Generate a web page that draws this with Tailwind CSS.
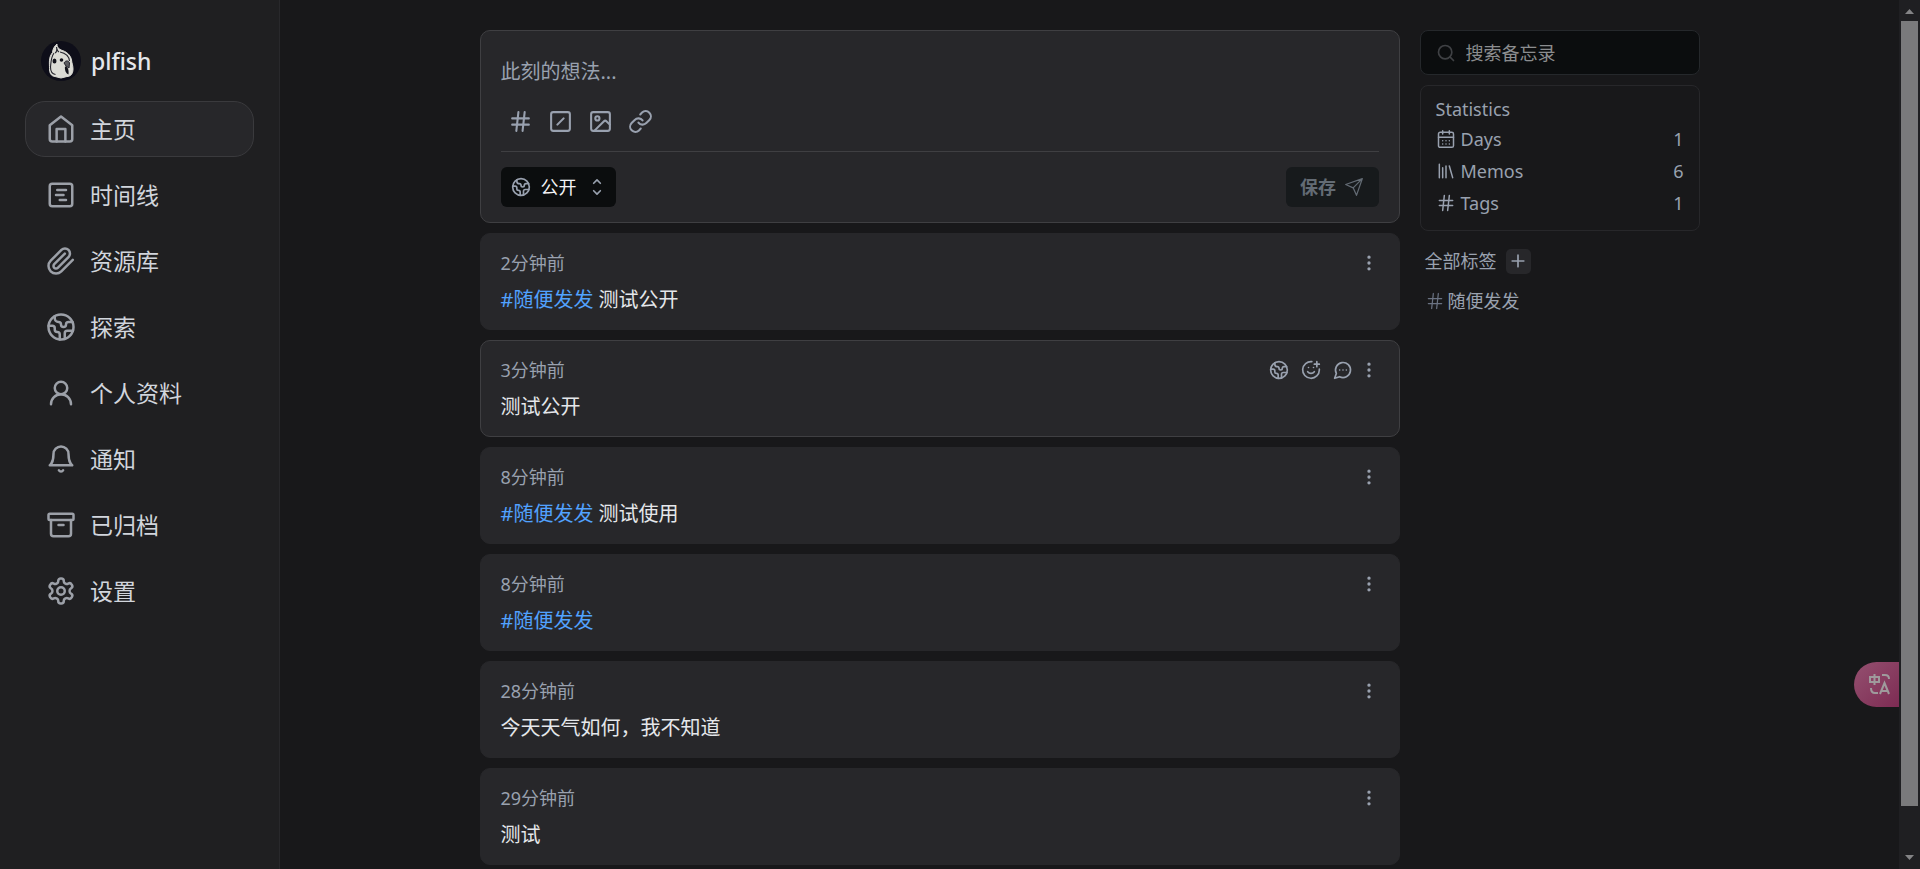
<!DOCTYPE html>
<html lang="zh-CN" class="h-full">
<head>
<meta charset="utf-8">
<title>Memos</title>
<script src="https://cdn.jsdelivr.net/npm/@tailwindcss/browser@4"></script>
</head>
<body class="h-screen overflow-hidden bg-[#18181a] font-['Noto_Sans','Noto_Sans_CJK_SC',sans-serif] text-gray-400 flex">

<svg class="hidden" aria-hidden="true">
  <defs>
    <symbol id="home" viewBox="0 0 24 24"><path d="m3 9 9-7 9 7v11a2 2 0 0 1-2 2H5a2 2 0 0 1-2-2z"/><path d="M8.500 22V12h7v10"/></symbol>
    <symbol id="timeline" viewBox="0 0 24 24"><rect x="3" y="3" width="18" height="18" rx="2"/><path d="M9 8h7M8 12h6M11 16h5"/></symbol>
    <symbol id="clip" viewBox="0 0 24 24"><path d="m21.44 11.05-9.19 9.19a6 6 0 0 1-8.49-8.49l8.57-8.57A4 4 0 1 1 18 8.84l-8.59 8.57a2 2 0 0 1-2.83-2.83l8.49-8.48"/></symbol>
    <symbol id="globe" viewBox="0 0 24 24"><path d="M21.54 15H17a2 2 0 0 0-2 2v4.54"/><path d="M7 3.34V5a3 3 0 0 0 3 3a2 2 0 0 1 2 2c0 1.1.9 2 2 2a2 2 0 0 0 2-2c0-1.1.9-2 2-2h3.17"/><path d="M11 21.95V18a2 2 0 0 0-2-2a2 2 0 0 1-2-2v-1a2 2 0 0 0-2-2H2.05"/><circle cx="12" cy="12" r="10"/></symbol>
    <symbol id="user" viewBox="0 0 24 24"><circle cx="12" cy="8" r="5"/><path d="M20 21a8 8 0 0 0-16 0"/></symbol>
    <symbol id="bell" viewBox="0 0 24 24"><path d="M6 8a6 6 0 0 1 12 0c0 7 3 9 3 9H3s3-2 3-9"/><path d="M10.3 21a1.94 1.94 0 0 0 3.4 0"/></symbol>
    <symbol id="archive" viewBox="0 0 24 24"><rect x="2" y="3" width="20" height="5" rx="1"/><path d="M4 8v11a2 2 0 0 0 2 2h12a2 2 0 0 0 2-2V8"/><path d="M10 12h4"/></symbol>
    <symbol id="gear" viewBox="0 0 24 24"><path d="M12.22 2h-.44a2 2 0 0 0-2 2v.18a2 2 0 0 1-1 1.73l-.43.25a2 2 0 0 1-2 0l-.15-.08a2 2 0 0 0-2.73.73l-.22.38a2 2 0 0 0 .73 2.73l.15.1a2 2 0 0 1 1 1.72v.51a2 2 0 0 1-1 1.74l-.15.09a2 2 0 0 0-.73 2.73l.22.38a2 2 0 0 0 2.73.73l.15-.08a2 2 0 0 1 2 0l.43.25a2 2 0 0 1 1 1.73V20a2 2 0 0 0 2 2h.44a2 2 0 0 0 2-2v-.18a2 2 0 0 1 1-1.73l.43-.25a2 2 0 0 1 2 0l.15.08a2 2 0 0 0 2.73-.73l.22-.39a2 2 0 0 0-.73-2.73l-.15-.08a2 2 0 0 1-1-1.74v-.5a2 2 0 0 1 1-1.74l.15-.09a2 2 0 0 0 .73-2.73l-.22-.38a2 2 0 0 0-2.73-.73l-.15.08a2 2 0 0 1-2 0l-.43-.25a2 2 0 0 1-1-1.73V4a2 2 0 0 0-2-2z"/><circle cx="12" cy="12" r="3"/></symbol>
    <symbol id="hash" viewBox="0 0 24 24"><path d="M4 9h16M4 15h16M10 3 8 21M16 3l-2 18"/></symbol>
    <symbol id="slash" viewBox="0 0 24 24"><rect x="3" y="3" width="18" height="18" rx="2"/><path d="m9 15 6-6"/></symbol>
    <symbol id="image" viewBox="0 0 24 24"><rect x="3" y="3" width="18" height="18" rx="2"/><circle cx="9" cy="9" r="2"/><path d="m21 15-3.086-3.086a2 2 0 0 0-2.828 0L6 21"/></symbol>
    <symbol id="link" viewBox="0 0 24 24"><path d="M10 13a5 5 0 0 0 7.54.54l3-3a5 5 0 0 0-7.07-7.07l-1.72 1.71"/><path d="M14 11a5 5 0 0 0-7.54-.54l-3 3a5 5 0 0 0 7.07 7.07l1.71-1.71"/></symbol>
    <symbol id="updown" viewBox="0 0 24 24"><path d="m8 16.500 4 4 4-4M8 7.500l4-4 4 4"/></symbol>
    <symbol id="send" viewBox="0 0 24 24"><path d="m22 2-7 20-4-9-9-4ZM22 2 11 13"/></symbol>
    <symbol id="dots" viewBox="0 0 24 24"><circle cx="12" cy="12" r="1"/><circle cx="12" cy="5" r="1"/><circle cx="12" cy="19" r="1"/></symbol>
    <symbol id="smile" viewBox="0 0 24 24"><path d="M22 11v1a10 10 0 1 1-9-10"/><path d="M8 14s1.500 2 4 2 4-2 4-2M9 9h.01M15 9h.01M16 5h6M19 2v6"/></symbol>
    <symbol id="chat" viewBox="0 0 24 24"><path d="M7.900 20A9 9 0 1 0 4 16.100L2 22Z"/><path d="M8 12h.01M12 12h.01M16 12h.01"/></symbol>
    <symbol id="search" viewBox="0 0 24 24"><circle cx="11" cy="11" r="8"/><path d="m21 21-4.300-4.300"/></symbol>
    <symbol id="calendar" viewBox="0 0 24 24"><rect x="3" y="4" width="18" height="18" rx="2"/><path d="M16 2v4M8 2v4M3 10h18M8 14h.01M12 14h.01M16 14h.01M8 18h.01M12 18h.01M16 18h.01"/></symbol>
    <symbol id="library" viewBox="0 0 24 24"><path d="m16 6 4 14M12 6v14M8 8v12M4 4v16"/></symbol>
    <symbol id="plus" viewBox="0 0 24 24"><path d="M5 12h14M12 5v14"/></symbol>
  </defs>
</svg>

<aside class="w-[280px] shrink-0 h-full bg-[#1f1f21] border-r border-[#28282b] px-[25px] pt-[31px]">
  <a href="#" class="flex items-center gap-[10px] px-4 h-[60px] text-[23px] leading-8 font-medium text-gray-200">
    <svg class="size-10" viewBox="0 0 40 40" aria-hidden="true">
      <circle cx="20" cy="20" r="20" fill="#0e0e19"/>
      <path d="M16 3c-.5 3 1.500 4.500 4 6 5 1.500 9.500 4.500 10.500 10 .2 3 1.500 5 1.500 9 0 5-2.500 7.500-6 7.500l-6 1.500-6-1.500c-4.500-.5-5.500-4-5.500-8 0-6-1-11 3-16 .3-3.500 2-6.500 4.500-8.500Z" fill="#dcdcd6" stroke="#dcdcd6" stroke-width="1"/>
      <path d="M14 12c2-1 2-3.500 1.500-6M18 11c-1.500-1-2-2-2-3.500M13 12c-3 4-3 9-3.500 14 0 4 1 7 5 7.500M19 11c5 1 9 4 9.500 9" fill="none" stroke="#26262e" stroke-width="1.100"/>
      <ellipse cx="13.500" cy="20" rx="2" ry="2.600" fill="#14141c"/><circle cx="20.500" cy="19" r="1.800" fill="#14141c"/>
      <path d="M23 22c1.500-3 5-2.500 5.500 0l-.5 5-3-2Z" fill="#5c5c60" stroke="#26262e"/><path d="M24 25.500c2.500 0 4 2.500 3.500 8-2.500-1-4-4-3.500-8Z" fill="#14141c"/>
    </svg>
    <span>plfish</span>
  </a>
  <nav class="mt-[10px] flex flex-col gap-[10px] text-[23px] text-gray-300 [&_a]:flex [&_a]:items-center [&_a]:gap-[14px] [&_a]:h-14 [&_a]:px-5 [&_a]:rounded-[20px] [&_a]:border [&_a]:border-transparent [&_svg]:size-[30px] [&_svg]:fill-none [&_svg]:stroke-[#9ca0a8] [&_svg]:stroke-2 [&_svg]:[stroke-linecap:round] [&_svg]:[stroke-linejoin:round]">
    <a href="#" aria-current="page" class="bg-[#27272a] !border-[#3a3a3d]"><svg><use href="#home"/></svg>主页</a>
    <a href="#"><svg><use href="#timeline"/></svg>时间线</a>
    <a href="#"><svg><use href="#clip"/></svg>资源库</a>
    <a href="#"><svg><use href="#globe"/></svg>探索</a>
    <a href="#"><svg><use href="#user"/></svg>个人资料</a>
    <a href="#"><svg><use href="#bell"/></svg>通知</a>
    <a href="#"><svg><use href="#archive"/></svg>已归档</a>
    <a href="#"><svg><use href="#gear"/></svg>设置</a>
  </nav>
</aside>

<div class="flex-1 min-w-0 h-full overflow-hidden flex justify-center gap-5 px-5 pt-[30px] [&_svg]:fill-none [&_svg]:stroke-current [&_svg]:stroke-2 [&_svg]:[stroke-linecap:round] [&_svg]:[stroke-linejoin:round] [&_svg]:shrink-0">
  <main class="w-full max-w-[920px] flex flex-col gap-[10px] text-xl">
    <form class="shrink-0 rounded-[10px] border border-[#3f3f42] bg-[#27272a] px-5 pt-[25px] pb-[15px]">
      <textarea aria-label="此刻的想法" rows="1" placeholder="此刻的想法..." class="block w-full h-8 leading-8 resize-none bg-transparent outline-none placeholder:text-gray-400"></textarea>
      <div class="flex mt-[13px] pb-[10px] border-b border-[#3f3f42] [&_button]:size-10 [&_button]:grid [&_button]:place-items-center [&_svg]:size-[25px]">
        <button type="button" aria-label="标签"><svg><use href="#hash"/></svg></button>
        <button type="button" aria-label="命令"><svg><use href="#slash"/></svg></button>
        <button type="button" aria-label="图片"><svg><use href="#image"/></svg></button>
        <button type="button" aria-label="链接"><svg><use href="#link"/></svg></button>
      </div>
      <div class="mt-[15px] flex justify-between items-center">
        <div class="relative flex items-center h-10 w-[115px] rounded-md bg-[#0b0d0e] text-gray-400">
          <svg class="absolute left-[10px] size-5 pointer-events-none"><use href="#globe"/></svg>
          <select aria-label="可见性" class="appearance-none w-full h-full pl-10 bg-transparent text-lg text-gray-100 outline-none"><option>公开</option><option>私有</option></select>
          <svg class="absolute right-[9px] size-5 pointer-events-none"><use href="#updown"/></svg>
        </div>
        <button type="submit" disabled class="flex items-center justify-center gap-2 h-10 w-[93px] rounded-md bg-[#171a1c] text-lg font-bold text-[#636b74]">保存<svg class="size-5 !stroke-[1.5]"><use href="#send"/></svg></button>
      </div>
    </form>

    <article class="shrink-0 h-[97px] rounded-[10px] border border-[#27272a] bg-[#27272a] px-5 pt-4">
      <header class="flex items-center justify-between h-[26px] text-lg text-gray-400"><time>2分钟前</time><button aria-label="更多"><svg class="size-5"><use href="#dots"/></svg></button></header>
      <p class="mt-2 leading-8 text-gray-200"><a href="#" class="text-blue-400">#随便发发</a> 测试公开</p>
    </article>
    <article class="shrink-0 h-[97px] rounded-[10px] border border-[#3f3f42] bg-[#27272a] px-5 pt-4">
      <header class="flex items-center justify-between h-[26px] text-lg text-gray-400"><time>3分钟前</time>
        <div class="flex items-center"><button aria-label="公开" class="mr-3"><svg class="size-5"><use href="#globe"/></svg></button><button aria-label="表情" class="mr-3"><svg class="size-5"><use href="#smile"/></svg></button><button aria-label="评论" class="mr-[6px]"><svg class="size-5"><use href="#chat"/></svg></button><button aria-label="更多"><svg class="size-5"><use href="#dots"/></svg></button></div></header>
      <p class="mt-2 leading-8 text-gray-200">测试公开</p>
    </article>
    <article class="shrink-0 h-[97px] rounded-[10px] border border-[#27272a] bg-[#27272a] px-5 pt-4">
      <header class="flex items-center justify-between h-[26px] text-lg text-gray-400"><time>8分钟前</time><button aria-label="更多"><svg class="size-5"><use href="#dots"/></svg></button></header>
      <p class="mt-2 leading-8 text-gray-200"><a href="#" class="text-blue-400">#随便发发</a> 测试使用</p>
    </article>
    <article class="shrink-0 h-[97px] rounded-[10px] border border-[#27272a] bg-[#27272a] px-5 pt-4">
      <header class="flex items-center justify-between h-[26px] text-lg text-gray-400"><time>8分钟前</time><button aria-label="更多"><svg class="size-5"><use href="#dots"/></svg></button></header>
      <p class="mt-2 leading-8 text-gray-200"><a href="#" class="text-blue-400">#随便发发</a></p>
    </article>
    <article class="shrink-0 h-[97px] rounded-[10px] border border-[#27272a] bg-[#27272a] px-5 pt-4">
      <header class="flex items-center justify-between h-[26px] text-lg text-gray-400"><time>28分钟前</time><button aria-label="更多"><svg class="size-5"><use href="#dots"/></svg></button></header>
      <p class="mt-2 leading-8 text-gray-200">今天天气如何，我不知道</p>
    </article>
    <article class="shrink-0 h-[97px] rounded-[10px] border border-[#27272a] bg-[#27272a] px-5 pt-4">
      <header class="flex items-center justify-between h-[26px] text-lg text-gray-400"><time>29分钟前</time><button aria-label="更多"><svg class="size-5"><use href="#dots"/></svg></button></header>
      <p class="mt-2 leading-8 text-gray-200">测试</p>
    </article>
  </main>

  <section class="w-[280px] shrink-0 text-lg">
    <label class="flex items-center gap-[10px] h-[45px] px-[15px] rounded-lg border border-[#25282b] bg-[#0b0d0e]">
      <svg class="size-5 text-[#3f4144]"><use href="#search"/></svg>
      <input type="search" aria-label="搜索备忘录" placeholder="搜索备忘录" class="min-w-0 flex-1 bg-transparent outline-none placeholder:text-[#8b8d8f]">
    </label>
    <div class="mt-[10px] h-[146px] px-[15px] pt-[11px] rounded-lg border border-[#27272a]">
      <h2 class="leading-6">Statistics</h2>
      <dl class="mt-[2px] [&>div]:flex [&>div]:items-center [&>div]:h-8 [&_dt]:flex [&_dt]:items-center [&_dt]:gap-[5px] [&_dt]:flex-1 [&_svg]:size-5 [&_svg]:!stroke-[1.8]">
        <div><dt><svg><use href="#calendar"/></svg>Days</dt><dd>1</dd></div>
        <div><dt><svg><use href="#library"/></svg>Memos</dt><dd>6</dd></div>
        <div><dt><svg><use href="#hash"/></svg>Tags</dt><dd>1</dd></div>
      </dl>
    </div>
    <div class="mt-4 flex items-center gap-[9px] pl-[5px] leading-7">全部标签
      <button aria-label="新建标签" class="size-[25px] grid place-items-center rounded-[5px] bg-[#27272a]"><svg class="size-5"><use href="#plus"/></svg></button>
    </div>
    <a href="#" class="mt-[14px] flex items-center gap-[3px] pl-[5px] leading-6"><svg class="size-5 text-gray-500 !stroke-[1.5]"><use href="#hash"/></svg>随便发发</a>
  </section>
</div>

<button aria-label="翻译" class="fixed right-[21px] top-[662px] w-[45px] h-[45px] rounded-l-full bg-linear-to-br from-[#945070] to-[#7d2b53] grid place-items-center">
  <svg class="size-6 ml-1 mb-1" viewBox="0 0 24 24" fill="none" stroke="#9f9a9c" stroke-width="2" aria-hidden="true"><path d="M3 6h9v5H3zM7.500 3v11M15 4h3q4 0 4 4M4 17q0 5 4 5h3M13 23l4.500-11L22 23M14.500 20h6"/></svg>
</button>

<div class="w-[21px] shrink-0 h-full bg-[#1f1f22] flex flex-col items-center" aria-hidden="true">
  <svg class="w-[9px] h-[21px] shrink-0" viewBox="0 0 9 21"><path d="M0 14h9L4.500 9z" fill="#848486"/></svg>
  <div class="w-[17px] flex-1 bg-[#7a7a7c]"></div>
  <svg class="w-[9px] h-[63px] shrink-0" viewBox="0 0 9 63"><path d="M0 49h9l-4.500 5z" fill="#848486"/></svg>
</div>
</body>
</html>
